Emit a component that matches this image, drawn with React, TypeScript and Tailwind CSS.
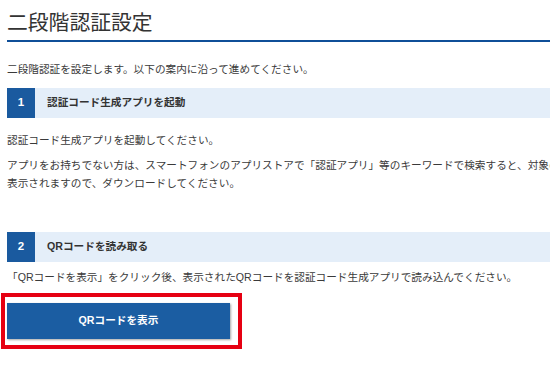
import React from "react";

const font = { fontFamily: '"Liberation Sans", "Noto Sans CJK JP", sans-serif' };

function StepHeader({ num, title }: { num: string; title: string }) {
  return (
    <div className="flex h-[30px] items-stretch bg-[#e4eef9]">
      <div className="flex w-[28px] items-center justify-center bg-[#1a5a9f] text-[11.5px] font-bold text-white">
        {num}
      </div>
      <div className="flex items-center pl-[12px] text-[10.65px] font-bold text-[#333]">{title}</div>
    </div>
  );
}

export default function App() {
  return (
    <div className="w-[550px] h-[365px] overflow-hidden bg-white pl-[7px] text-[#3a3a3a]" style={font}>
      <h1 className="pt-[9px] pb-[3px] text-[20.8px] leading-[28px] font-normal text-[#333] border-b-2 border-[#0f4f98]">
        二段階認証設定
      </h1>
      <p className="mt-[18px] text-[10.65px] leading-[18px] whitespace-nowrap">
        二段階認証を設定します。以下の案内に沿って進めてください。
      </p>
      <div className="mt-[10px]">
        <StepHeader num="1" title="認証コード生成アプリを起動" />
      </div>
      <p className="mt-[13px] text-[10.65px] leading-[18px] whitespace-nowrap">
        認証コード生成アプリを起動してください。
      </p>
      <p className="mt-[7px] text-[10.65px] leading-[18px] whitespace-nowrap">
        アプリをお持ちでない方は、スマートフォンのアプリストアで「認証アプリ」等のキーワードで検索すると、対象のアプリが
        <br />
        表示されますので、ダウンロードしてください。
      </p>
      <div className="mt-[40px]">
        <StepHeader num="2" title="QRコードを読み取る" />
      </div>
      <p className="mt-[6px] text-[10.65px] leading-[18px] whitespace-nowrap">
        「QRコードを表示」をクリック後、表示されたQRコードを認証コード生成アプリで読み込んでください。
      </p>
      <div className="mt-[7px] -ml-[6px] w-[241px] border-4 border-[#e60012] pt-[6px] pb-[6px] pl-[2px] pr-[8px]">
        <button className="flex h-[36px] w-[223px] items-center justify-center bg-[#1b5da2] text-[10.65px] font-bold text-white shadow-[1px_1px_2px_rgba(0,0,0,0.35)]">
          QRコードを表示
        </button>
      </div>
    </div>
  );
}
